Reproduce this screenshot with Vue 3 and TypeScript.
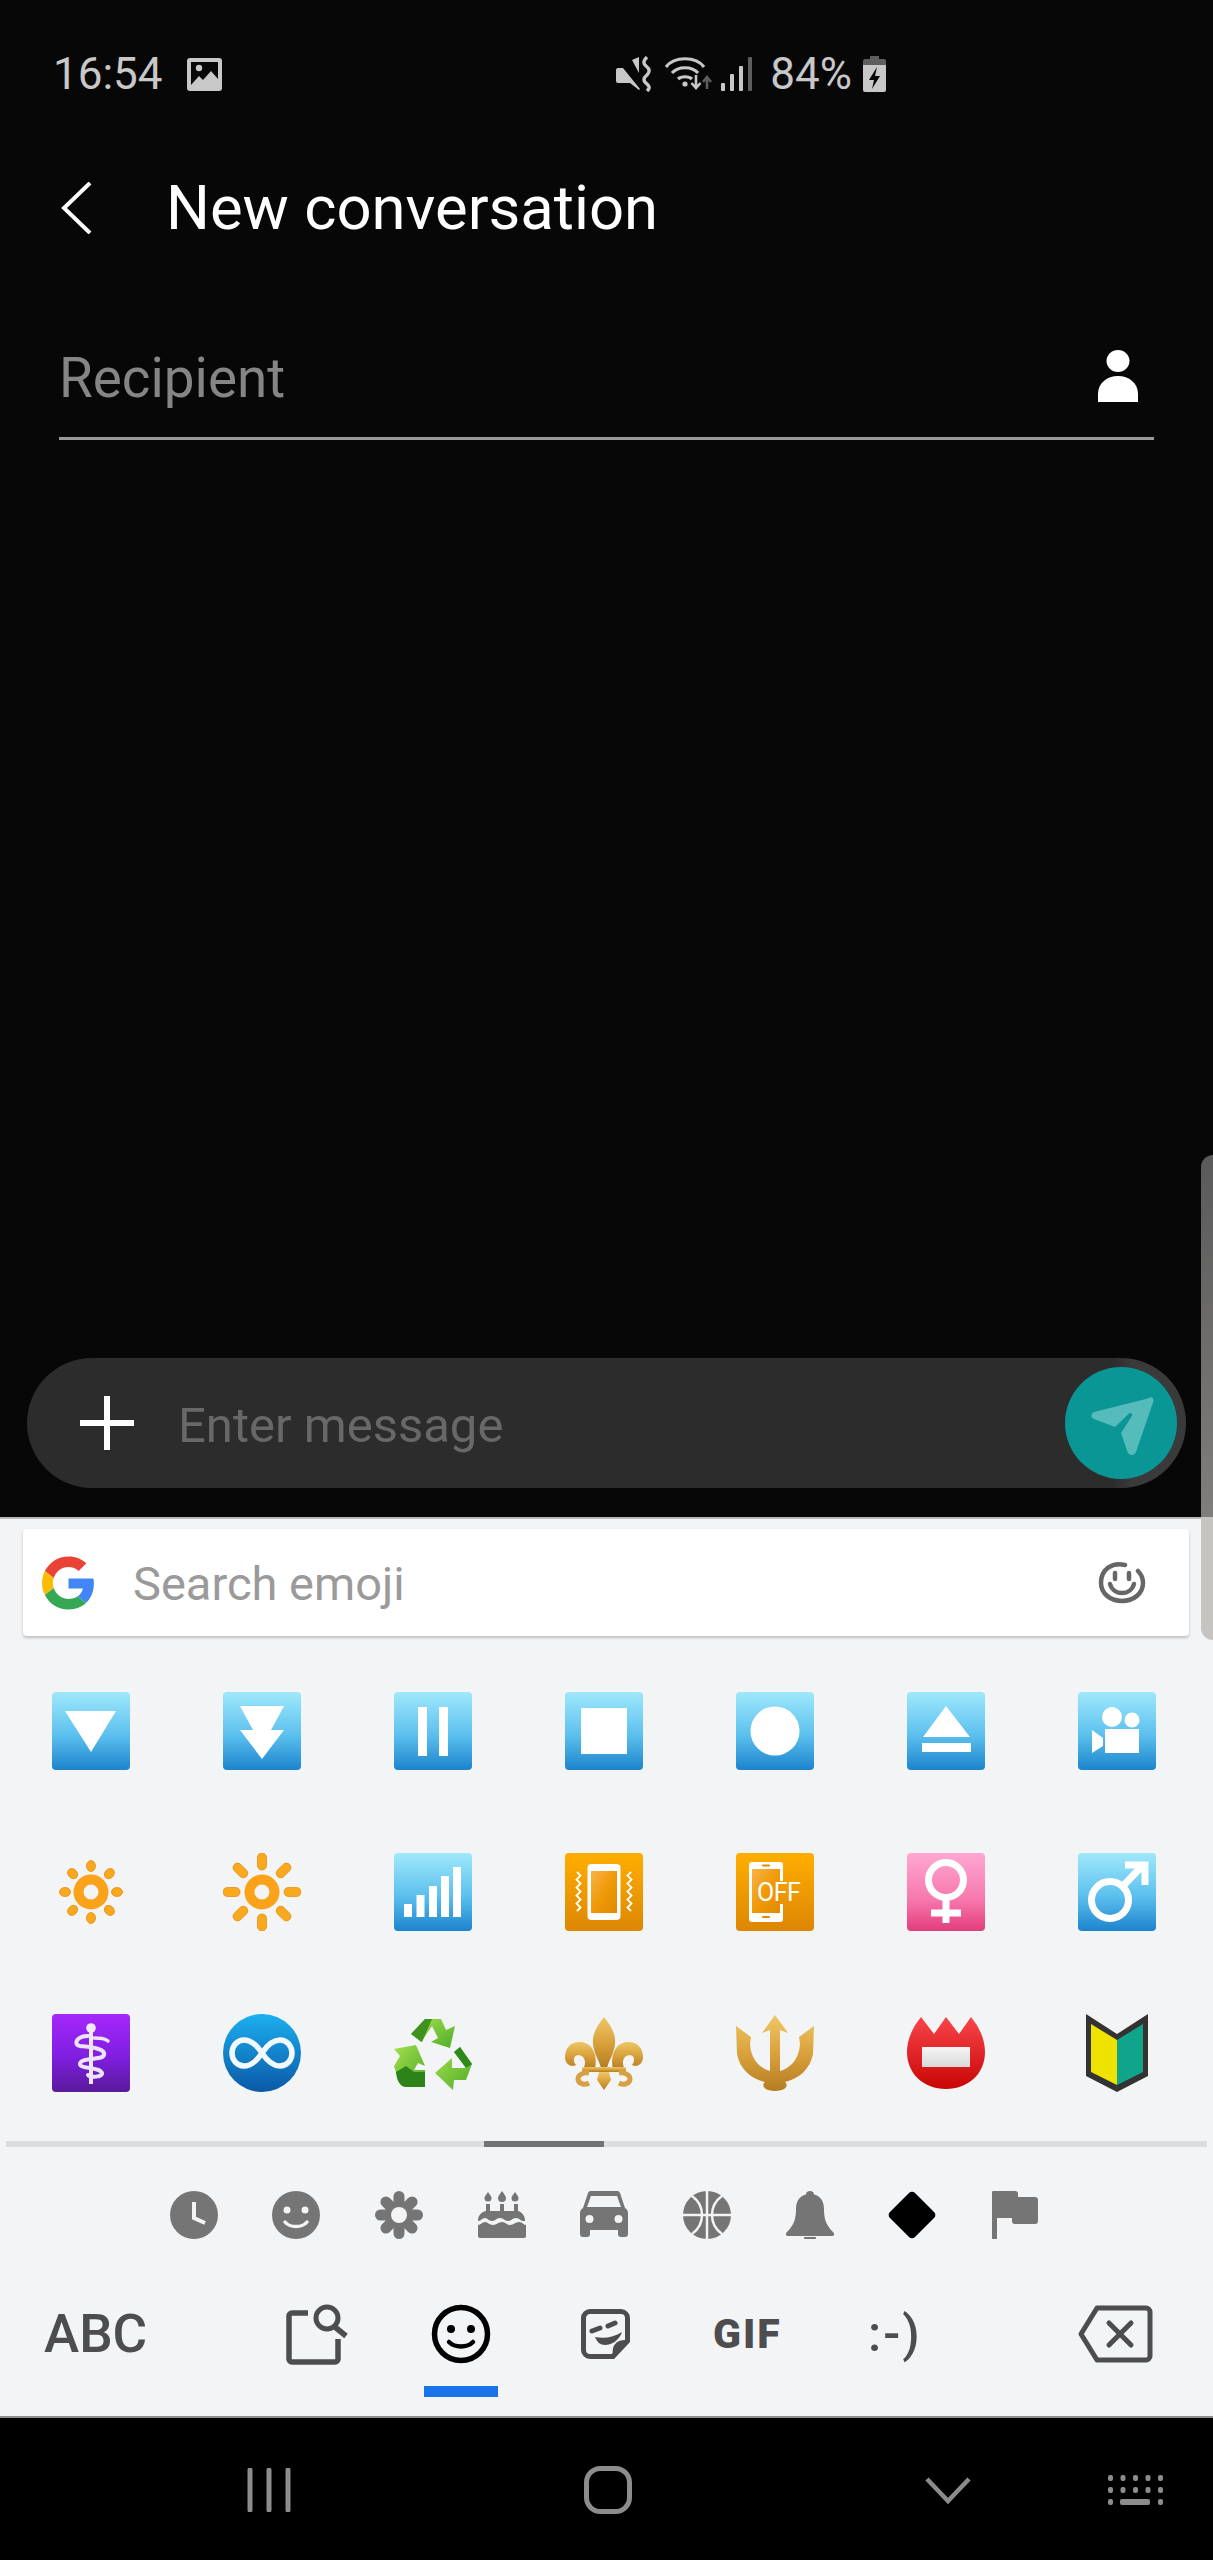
<script setup lang="ts">
/**
 * New conversation screen with the emoji keyboard open
 */
const rayAngles: number[] = [0, 45, 90, 135, 180, 225, 270, 315]
const petalAngles: number[] = [0, 45, 90, 135, 180, 225, 270, 315]
</script>

<template>
  <div class="phone">
    <!-- shared gradients -->
    <svg class="defs" width="0" height="0" aria-hidden="true">
      <defs>
        <linearGradient id="blue" x1="0" y1="0" x2="0" y2="1">
          <stop offset="0" stop-color="#a0e8fb" />
          <stop offset="0.55" stop-color="#5cc0ee" />
          <stop offset="1" stop-color="#1c84cd" />
        </linearGradient>
        <linearGradient id="orange" x1="0" y1="0" x2="0" y2="1">
          <stop offset="0" stop-color="#ffae00" />
          <stop offset="1" stop-color="#dd8604" />
        </linearGradient>
        <linearGradient id="screen" x1="0" y1="0" x2="1" y2="1">
          <stop offset="0" stop-color="#f8b34a" />
          <stop offset="0.5" stop-color="#f09a08" />
          <stop offset="1" stop-color="#e08a00" />
        </linearGradient>
        <linearGradient id="pink" x1="0" y1="0" x2="0" y2="1">
          <stop offset="0" stop-color="#ffa8d2" />
          <stop offset="0.6" stop-color="#f777ac" />
          <stop offset="1" stop-color="#e23d7c" />
        </linearGradient>
        <linearGradient id="purple" x1="0" y1="0" x2="0" y2="1">
          <stop offset="0" stop-color="#a428fb" />
          <stop offset="0.55" stop-color="#7f1ee0" />
          <stop offset="1" stop-color="#591a9a" />
        </linearGradient>
        <linearGradient id="disc" x1="0" y1="0" x2="0" y2="1">
          <stop offset="0" stop-color="#1cb0f0" />
          <stop offset="1" stop-color="#0a58a6" />
        </linearGradient>
        <linearGradient id="green" x1="0" y1="0" x2="1" y2="1">
          <stop offset="0" stop-color="#a6de4e" />
          <stop offset="1" stop-color="#4fae2a" />
        </linearGradient>
        <linearGradient id="gold" x1="0" y1="0" x2="0" y2="1">
          <stop offset="0" stop-color="#efc767" />
          <stop offset="0.5" stop-color="#d9a23c" />
          <stop offset="1" stop-color="#b57d22" />
        </linearGradient>
        <linearGradient id="red" x1="0" y1="0" x2="0" y2="1">
          <stop offset="0" stop-color="#f8454a" />
          <stop offset="1" stop-color="#c90505" />
        </linearGradient>
        <linearGradient id="plate" x1="0" y1="0" x2="0" y2="1">
          <stop offset="0" stop-color="#f6f6f6" />
          <stop offset="1" stop-color="#d8d8d8" />
        </linearGradient>
      </defs>
    </svg>

    <div class="status">
      <div class="status__left">
        <span class="status__time">16:54</span>
        <svg class="status__pic" width="35" height="33" viewBox="0 0 35 33">
          <path fill="#c8c8c8" d="M3 0h29a3 3 0 0 1 3 3v27a3 3 0 0 1-3 3H3a3 3 0 0 1-3-3V3a3 3 0 0 1 3-3z" />
          <path fill="#070708" d="M4 4h27v17l-7-8-8 9-4-4-8 9z" />
          <circle cx="12" cy="10" r="3.2" fill="#c8c8c8" />
        </svg>
      </div>
      <div class="status__right">
        <svg width="36" height="36" viewBox="0 0 36 36">
          <path fill="#c8c8c8" d="M0 14a2 2 0 0 1 2-2h5l17 21-1 1-9-7H2a2 2 0 0 1-2-2zM16 4l7-3v16z" />
          <path d="M31 1c-4 4-4 6-1 9 4 3 4 6 1 9-4 3-4 6 0 9 3 3 3 4 0 7" fill="none" stroke="#c8c8c8" stroke-width="3.4" />
        </svg>
        <svg class="status__wifi" width="48" height="36" viewBox="0 0 48 36">
          <path d="M1 11C9 0 31 0 39 11M7 17c6-7 20-7 26 0M13 23c3-3 11-3 14 0" fill="none" stroke="#c8c8c8" stroke-width="3.2" />
          <circle cx="20" cy="28" r="2.6" fill="#c8c8c8" />
          <path d="M31 19v12m-4.500-4 4.500 5 4.500-5" fill="none" stroke="#c8c8c8" stroke-width="2.600" />
          <path d="M42 33V22m-4 4 4-5 4 5" fill="none" stroke="#5c5c5c" stroke-width="2.600" />
        </svg>
        <svg class="status__signal" width="31" height="34" viewBox="0 0 31 34">
          <rect x="0" y="26" width="4" height="8" rx="1" fill="#c8c8c8" />
          <rect x="9" y="17" width="4" height="17" rx="1" fill="#c8c8c8" />
          <rect x="18" y="9" width="4" height="25" rx="1" fill="#c8c8c8" />
          <rect x="27" y="0" width="4" height="34" rx="1" fill="#5e5e5e" />
        </svg>
        <span class="status__pct">84%</span>
        <svg class="status__battery" width="23" height="36" viewBox="0 0 23 36">
          <path fill="#5e5e5e" d="M7 0h9v3h5a2 2 0 0 1 2 2v5H0V5a2 2 0 0 1 2-2h5z" />
          <path fill="#c8c8c8" d="M0 9h23v25a2 2 0 0 1-2 2H2a2 2 0 0 1-2-2z" />
          <path fill="#070708" d="M14 11 6 24h5l-2 9 8-13h-5z" />
        </svg>
      </div>
    </div>

    <div class="header">
      <svg class="header__back" width="32" height="52" viewBox="0 0 32 52">
        <path d="M30 1 4 26l26 25" fill="none" stroke="#fff" stroke-width="4" />
      </svg>
      <span class="header__title">New conversation</span>
    </div>

    <div class="recipient">
      <span class="recipient__label">Recipient</span>
      <svg width="40" height="52" viewBox="0 0 40 52">
        <ellipse cx="20" cy="11" rx="11.500" ry="11" fill="#fff" />
        <path d="M0 52V44C0 33 9 26 20 26s20 7 20 18v8z" fill="#fff" />
      </svg>
    </div>

    <div class="spacer"></div>

    <div class="composer">
      <svg class="composer__plus" width="54" height="54" viewBox="0 0 54 54">
        <path d="M27 0v54M0 27h54" stroke="#fff" stroke-width="6" />
      </svg>
      <span class="composer__hint">Enter message</span>
      <div class="composer__send">
        <svg width="112" height="112" viewBox="0 0 112 112">
          <path
            fill="#55bcbb"
            d="M83 31.500c2-2.500 6-1 5.500 2.500L71 85c-1.500 4-7 4-8.500 0L56 66l11-17c1-2-1.500-4-3-2.500L50 60 29 52c-3.500-1.500-3.500-5.500 0-7z"
          />
        </svg>
      </div>
    </div>

    <div class="keyboard">
      <div class="search">
        <svg class="search__logo" width="53" height="54" viewBox="0 0 48 48">
          <path fill="#ea4335" d="M24 9.500c3.500 0 6.700 1.200 9.200 3.600l6.900-6.900C35.900 2.400 30.500 0 24 0 14.600 0 6.500 5.400 2.600 13.200l8 6.200C12.500 13.700 17.800 9.500 24 9.500z" />
          <path fill="#4285f4" d="M47 24.500c0-1.600-.2-3.200-.5-4.500H24v9h13c-.6 3-2.300 5.500-4.900 7.200l7.700 6C44.300 38 47 31.900 47 24.500z" />
          <path fill="#fbbc05" d="M10.600 28.600C10.100 27.100 9.800 25.600 9.800 24s.3-3.100.8-4.600l-8-6.200C1 16.400 0 20.100 0 24s1 7.600 2.600 10.800z" />
          <path fill="#34a853" d="M24 48c6.500 0 11.900-2.100 15.800-5.800l-7.700-6c-2.100 1.400-4.900 2.300-8.100 2.300-6.200 0-11.500-4.200-13.400-9.900l-8 6.200C6.500 42.600 14.600 48 24 48z" />
        </svg>
        <span class="search__hint">Search emoji</span>
        <svg class="search__face" width="48" height="42" viewBox="0 0 48 42">
          <path d="M27 3C14 0 3 7 3 21c0 11 10 18 21 18s21-7 21-18c0-5-2-9-5-12" fill="none" stroke="#666" stroke-width="4.500" stroke-linecap="round" />
          <path d="M12 22c2 7 8 9 12 9s10-2 12-9" fill="none" stroke="#666" stroke-width="4.500" stroke-linecap="round" />
          <path d="M17 11v6M31 11v6" stroke="#666" stroke-width="4.500" stroke-linecap="round" />
        </svg>
      </div>

      <div class="emoji-grid">
        <!-- row 1 -->
        <svg class="emoji" viewBox="0 0 78 78">
          <rect width="78" height="78" rx="4" fill="url(#blue)" />
          <path d="M13 19h51L39 60z" fill="#fff" />
        </svg>
        <svg class="emoji" viewBox="0 0 78 78">
          <rect width="78" height="78" rx="4" fill="url(#blue)" />
          <path d="M17 14h44L48 38h13L39 67 17 38h13z" fill="#fff" />
        </svg>
        <svg class="emoji" viewBox="0 0 78 78">
          <rect width="78" height="78" rx="4" fill="url(#blue)" />
          <path d="M24 15h9v49h-9zM45 15h9v49h-9z" fill="#fff" />
        </svg>
        <svg class="emoji" viewBox="0 0 78 78">
          <rect width="78" height="78" rx="4" fill="url(#blue)" />
          <rect x="16" y="16" width="46" height="46" fill="#fff" />
        </svg>
        <svg class="emoji" viewBox="0 0 78 78">
          <rect width="78" height="78" rx="4" fill="url(#blue)" />
          <circle cx="39" cy="39" r="24.500" fill="#fff" />
        </svg>
        <svg class="emoji" viewBox="0 0 78 78">
          <rect width="78" height="78" rx="4" fill="url(#blue)" />
          <path d="M39 14l24 31H16zM15 51h49v9H15z" fill="#fff" />
        </svg>
        <svg class="emoji" viewBox="0 0 78 78">
          <rect width="78" height="78" rx="4" fill="url(#blue)" />
          <circle cx="34" cy="25" r="10" fill="#fff" />
          <circle cx="54" cy="28" r="7.500" fill="#fff" />
          <path d="M27 37h34v24H27zM14 38l11 8v8l-11 7z" fill="#fff" />
        </svg>

        <!-- row 2 -->
        <svg class="emoji" viewBox="0 0 78 78">
          <g fill="#f9a91e" stroke="#e78d12" stroke-width="0.800">
            <ellipse
              v-for="a in rayAngles"
              :key="a"
              cx="39"
              cy="13"
              rx="4.500"
              ry="5.500"
              :transform="`rotate(${a} 39 39)`"
            />
          </g>
          <circle cx="39" cy="39" r="12.500" fill="none" stroke="#f9a21a" stroke-width="10" />
        </svg>
        <svg class="emoji" viewBox="0 0 78 78">
          <g fill="#f9a91e" stroke="#e78d12" stroke-width="0.800">
            <rect
              v-for="a in rayAngles"
              :key="a"
              x="34.500"
              y="0"
              width="9"
              height="17"
              rx="4.500"
              :transform="`rotate(${a} 39 39)`"
            />
          </g>
          <circle cx="39" cy="39" r="12.500" fill="none" stroke="#f9a21a" stroke-width="10" />
        </svg>
        <svg class="emoji" viewBox="0 0 78 78">
          <rect width="78" height="78" rx="4" fill="url(#blue)" />
          <path d="M10 51h8v13h-8zM22.500 42h8v22h-8zM35 33h8v31h-8zM47 23h8v41h-8zM59 14h8v50h-8z" fill="#fff" />
        </svg>
        <svg class="emoji" viewBox="0 0 78 78">
          <rect width="78" height="78" rx="4" fill="url(#orange)" />
          <rect x="22.500" y="11" width="33" height="56" rx="4" fill="#fff" />
          <rect x="26" y="18" width="26" height="42" fill="url(#screen)" />
          <path d="M12 19l3.500 3.500-4 4 4 4-4 4 4 4-4 4 4 4-4 4 4 4-3.500 3.500M66 19l-3.500 3.500 4 4-4 4 4 4-4 4 4 4-4 4 4 4-4 4 3.500 3.500" fill="none" stroke="#fff" stroke-width="1.800" />
        </svg>
        <svg class="emoji" viewBox="0 0 78 78">
          <rect width="78" height="78" rx="4" fill="url(#orange)" />
          <path d="M16 9h28a3 3 0 0 1 3 3v16h-3v-12H16v44h28v-9h3v15a3 3 0 0 1-3 3H16a3 3 0 0 1-3-3V12a3 3 0 0 1 3-3z" fill="#fff" />
          <rect x="16" y="16" width="28" height="44" fill="url(#screen)" />
          <rect x="26" y="11.500" width="8" height="2" rx="1" fill="#e08a00" />
          <rect x="26" y="63" width="8" height="2" rx="1" fill="#e08a00" />
          <text class="emoji__off" x="21" y="48">OFF</text>
        </svg>
        <svg class="emoji" viewBox="0 0 78 78">
          <rect width="78" height="78" rx="4" fill="url(#pink)" />
          <circle cx="39" cy="27" r="17.500" fill="none" stroke="#fff" stroke-width="7" />
          <path d="M39 46v24M24 60h30" stroke="#fff" stroke-width="7" />
        </svg>
        <svg class="emoji" viewBox="0 0 78 78">
          <rect width="78" height="78" rx="4" fill="url(#blue)" />
          <circle cx="32" cy="47" r="18.500" fill="none" stroke="#fff" stroke-width="7" />
          <path d="M45 33l21-22M47 12h20v20" fill="none" stroke="#fff" stroke-width="7" />
        </svg>

        <!-- row 3 -->
        <svg class="emoji" viewBox="0 0 78 78">
          <rect width="78" height="78" rx="4" fill="url(#purple)" />
          <path d="M39 14v56" stroke="#f0e8fa" stroke-width="4" />
          <circle cx="39" cy="14" r="4.800" fill="#f0e8fa" />
          <path d="M36 22c-12 0-15 9-8 10 8 1 26 2 24 9-2 6-24 2-24 9 0 5 20 3 22 9 1 4-12 5-14 2" fill="none" stroke="#ece3f8" stroke-width="4" stroke-linecap="round" />
          <path d="M42 24c6 0 11 0 14 3" fill="none" stroke="#ece3f8" stroke-width="3.500" stroke-linecap="round" />
        </svg>
        <svg class="emoji" viewBox="0 0 78 78">
          <circle cx="39" cy="39" r="39" fill="url(#disc)" />
          <path d="M39 39c-6-9-12-13-18-13-7 0-12 6-12 13s5 13 12 13c6 0 12-4 18-13s12-13 18-13c7 0 12 6 12 13s-5 13-12 13c-6 0-12-4-18-13z" fill="none" stroke="#f2f9fe" stroke-width="5.500" />
        </svg>
        <svg class="emoji" viewBox="0 0 78 78">
          <path fill="url(#green)" d="M17 20 31 5h16l5 11 9-4-5 22-19-6 7-4-6-12-11 16z" />
          <path fill="#3f921f" d="M17 20 31 5h7L28 28z" />
          <path fill="url(#green)" d="M0 35l22-4 9 21-7-3-4 7h11v15H12c-5 0-8-5-9-9L0 52l6-10z" />
          <path fill="#2c8418" d="M20 58h11v15H12c-5 0-8-5-9-9l-1-6 10-6z" />
          <path fill="url(#green)" d="M66 33l12 17-6 16H60l-1 10-18-17 17-15v10h14L60 38z" />
          <path fill="#2f8a1a" d="M66 33l12 17-6 4-12-16z" />
        </svg>
        <svg class="emoji" viewBox="0 0 78 78">
          <g fill="url(#gold)">
            <path d="M39 3c7 9 12 17 11 27-1 10-6 16-8 24h-6c-2-8-7-14-8-24C27 20 32 12 39 3z" />
            <path d="M30 55C33 42 28 29 16 28 6 27 0 34 0 43c0 7 6 11 11 8-4-5-2-10 3-10 6 1 8 8 4 14z" />
            <path d="M48 55c-3-13 2-26 14-27 10-1 16 6 16 15 0 7-6 11-11 8 4-5 2-10-3-10-6 1-8 8-4 14z" />
            <rect x="17" y="53" width="44" height="5" rx="2" />
            <path d="M34 58h10l2 8-7 10-7-10z" />
          </g>
          <path d="M24 59c-6-1-11 2-11 6s6 7 11 4M54 59c6-1 11 2 11 6s-6 7-11 4" fill="none" stroke="#d5a144" stroke-width="5" />
        </svg>
        <svg class="emoji" viewBox="0 0 78 78">
          <path
            fill="url(#gold)"
            d="M39 1 52 19l-8-3v41c10-3 19-11 20-27l-1-7 15-11-1 28c-3 16-15 25-28 28 3 2 3 9-10 9s-13-7-10-9C16 65 4 56 1 40L0 12l15 11-1 7c1 16 10 24 20 27V16l-8 3z"
          />
        </svg>
        <svg class="emoji" viewBox="0 0 78 78">
          <path fill="url(#red)" d="M14 3l13 17L39 3l13 17L64 3c9 11 14 23 14 35 0 22-17 37-39 37S0 60 0 38C0 26 5 14 14 3z" />
          <rect x="15" y="33" width="48" height="20" fill="url(#plate)" />
        </svg>
        <svg class="emoji" viewBox="0 0 78 78">
          <path fill="#333" d="M8 0l31 20L70 0v62L39 78 8 62z" />
          <path fill="#efe100" d="M13 10l26 16v45L13 58z" />
          <path fill="#10a58a" d="M65 10 39 26v45l26-13z" />
        </svg>
      </div>

      <div class="pager"><div class="pager__thumb"></div></div>

      <div class="categories">
        <svg class="cat" viewBox="0 0 48 48">
          <circle cx="24" cy="24" r="24" fill="#757575" />
          <path d="M24 11v16l11 5" fill="none" stroke="#f2f4f6" stroke-width="4" />
        </svg>
        <svg class="cat" viewBox="0 0 48 48">
          <circle cx="24" cy="24" r="24" fill="#757575" />
          <circle cx="15" cy="19" r="3.500" fill="#f2f4f6" />
          <circle cx="33" cy="19" r="3.500" fill="#f2f4f6" />
          <path d="M13 31c5 6 17 6 22 0" fill="none" stroke="#f2f4f6" stroke-width="3.500" stroke-linecap="round" />
        </svg>
        <svg class="cat" viewBox="0 0 48 48">
          <rect
            v-for="a in petalAngles"
            :key="a"
            x="18.500"
            y="0"
            width="11"
            height="19"
            rx="5.500"
            fill="#757575"
            :transform="`rotate(${a} 24 24)`"
          />
          <circle cx="24" cy="24" r="11" fill="#757575" />
          <circle cx="24" cy="24" r="8" fill="#f2f4f6" />
        </svg>
        <svg class="cat" viewBox="0 0 48 48">
          <path fill="#757575" d="M10 1c2 3 3.500 4 3.500 6a3.500 3.500 0 0 1-7 0c0-2 1.500-3 3.500-6zM24 0c2 3 4 5 4 7a4 4 0 0 1-8 0c0-2 2-4 4-7zM37 1c2 3 3.500 4 3.500 6a3.500 3.500 0 0 1-7 0c0-2 1.500-3 3.500-6z" />
          <path fill="#757575" d="M8 13h4v7h10v-7h4v7h10v-7h4v7c4 1 7 5 7 9 0 1 0 1-2 1-3 0-3-3-7-3s-4 3-8 3-4-3-8-3-4 3-8 3-4-3-7-3-4 3-6 3c-1 0-1-1-1-1 0-4 3-8 8-9z" />
          <path fill="#757575" d="M0 34c3 0 4-3 7-3s4 3 8 3 5-3 9-3 4 3 8 3 5-3 9-3 4 3 7 3v11a2 2 0 0 1-2 2H2a2 2 0 0 1-2-2z" />
        </svg>
        <svg class="cat" viewBox="0 0 48 48">
          <path fill="#757575" d="M8 2a3 3 0 0 1 3-2h26a3 3 0 0 1 3 2l5 15c2 1 3 3 3 5v21a3 3 0 0 1-3 3h-4a3 3 0 0 1-3-3v-4H10v4a3 3 0 0 1-3 3H3a3 3 0 0 1-3-3V22c0-2 1-4 3-5z" />
          <path fill="#f2f4f6" d="M11 5h26l4 11H7z" />
          <circle cx="9.500" cy="28" r="4" fill="#f2f4f6" />
          <circle cx="38.500" cy="28" r="4" fill="#f2f4f6" />
        </svg>
        <svg class="cat" viewBox="0 0 48 48">
          <circle cx="24" cy="24" r="24" fill="#757575" />
          <path d="M24 0v48M0 24h48M9 5c7 5 10 12 10 19S16 38 9 43M39 5c-7 5-10 12-10 19s3 14 10 19" fill="none" stroke="#f2f4f6" stroke-width="2.500" />
        </svg>
        <svg class="cat" viewBox="0 0 48 48">
          <path fill="#757575" d="M24 0c2.500 0 4 1.500 4 3.500C35 5 38 11 38 18c0 10 2 16 9 23 2 2 1 4-1 4H2c-2 0-3-2-1-4 7-7 9-13 9-23 0-7 3-13 10-14.500C20 1.500 21.500 0 24 0z" />
          <path fill="#757575" d="M18 46h12c0 3-3 5-6 5s-6-2-6-5z" />
        </svg>
        <svg class="cat" viewBox="0 0 48 48">
          <path fill="#000" d="M21 2a4 4 0 0 1 6 0l19 19a4 4 0 0 1 0 6L27 46a4 4 0 0 1-6 0L2 27a4 4 0 0 1 0-6z" />
        </svg>
        <svg class="cat" viewBox="0 0 48 48">
          <path fill="#757575" d="M2 0h22c2 0 3 1 3 3v3h17c2 0 3 1 3 3v21c0 2-1 3-3 3H24c-2 0-3-1-3-3v-3H6v20c0 1.500-1 2-2 2s-3-.5-3-2V2c0-1 0-2 1-2z" />
        </svg>
      </div>

      <div class="tabs">
        <span class="tabs__abc">ABC</span>
        <svg class="tabs__find" width="65" height="65" viewBox="0 0 65 65">
          <path d="M23 11H7a3 3 0 0 0-3 3v43a3 3 0 0 0 3 3h43a3 3 0 0 0 3-3V37" fill="none" stroke="#4d4d4f" stroke-width="5.500" />
          <circle cx="42" cy="16" r="11" fill="none" stroke="#4d4d4f" stroke-width="5" />
          <path d="M50 25l11 9" stroke="#4d4d4f" stroke-width="5.500" />
        </svg>
        <div class="tabs__active">
          <svg width="60" height="60" viewBox="0 0 60 60">
            <circle cx="30" cy="30" r="26.500" fill="none" stroke="#000" stroke-width="5.500" />
            <circle cx="20" cy="25" r="4" fill="#000" />
            <circle cx="40" cy="25" r="4" fill="#000" />
            <path d="M18 38c6 6 18 6 24 0" fill="none" stroke="#000" stroke-width="4.500" stroke-linecap="round" />
          </svg>
        </div>
        <svg class="tabs__sticker" width="49" height="50" viewBox="0 0 49 50">
          <path d="M9 2.500h31a6.500 6.500 0 0 1 6.500 6.500v23L32 47.500H9A6.500 6.500 0 0 1 2.500 41V9A6.500 6.500 0 0 1 9 2.500z" fill="none" stroke="#4d4d4f" stroke-width="5" />
          <path d="M47 31c-12-1-17 5-15 17z" fill="#4d4d4f" />
          <path d="M11 22l8-3M27 17l7-3" stroke="#4d4d4f" stroke-width="5" stroke-linecap="round" />
          <path d="M14 28c10 2 19 0 27-5-3 9-11 13-17 13-5 0-8-3-10-8z" fill="#4d4d4f" />
        </svg>
        <span class="tabs__gif">GIF</span>
        <span class="tabs__text">:-)</span>
        <svg class="tabs__del" width="75" height="58" viewBox="0 0 75 58">
          <path d="M19 3h49a4 4 0 0 1 4 4v44a4 4 0 0 1-4 4H19L3 29z" fill="none" stroke="#4d4d4f" stroke-width="5" stroke-linejoin="round" />
          <path d="M31 18l22 22M53 18 31 40" stroke="#4d4d4f" stroke-width="5" stroke-linecap="round" />
        </svg>
      </div>
    </div>

    <div class="nav">
      <svg class="nav__recents" width="44" height="44" viewBox="0 0 44 44">
        <path d="M3 2v40M22 2v40M41 2v40" stroke="#8c8c8c" stroke-width="5" stroke-linecap="round" />
      </svg>
      <svg class="nav__home" width="48" height="48" viewBox="0 0 48 48">
        <rect x="2.500" y="2.500" width="43" height="43" rx="14" fill="none" stroke="#8c8c8c" stroke-width="5" />
      </svg>
      <svg class="nav__down" width="46" height="27" viewBox="0 0 46 27">
        <path d="M2 2l21 22L44 2" fill="none" stroke="#8c8c8c" stroke-width="4.500" />
      </svg>
      <svg class="nav__keys" width="55" height="30" viewBox="0 0 55 30">
        <g fill="#8c8c8c">
          <rect v-for="i in 5" :key="'a' + i" :x="(i - 1) * 12.500" y="0" width="5" height="6" rx="2" />
          <rect v-for="i in 5" :key="'b' + i" :x="(i - 1) * 12.500" y="12" width="5" height="6" rx="2" />
          <rect x="0" y="24" width="5" height="6" rx="2" />
          <rect x="12" y="24" width="30" height="6" rx="2" />
          <rect x="50" y="24" width="5" height="6" rx="2" />
        </g>
      </svg>
    </div>

    <!-- scroll handle lying over the right edge -->
    <div class="handle"></div>
  </div>
</template>

<style scoped>
.phone {
  position: relative;
  display: flex;
  flex-direction: column;
  width: 1213px;
  height: 2560px;
  overflow: hidden;
  background: #070708;
  font-family: Roboto, "Liberation Sans", sans-serif;
}

.defs {
  position: absolute;
}

/* Status bar */
.status {
  display: flex;
  align-items: center;
  justify-content: space-between;
  height: 148px;
  padding: 0 327px 0 53px;
  color: #c8c8c8;
  box-sizing: border-box;
}
.status__left,
.status__right {
  display: flex;
  align-items: center;
}
.status__time {
  font-size: 44px;
}
.status__pic {
  margin-left: 24px;
}
.status__wifi {
  margin-left: 13px;
}
.status__signal {
  margin-left: 8px;
}
.status__pct {
  margin-left: 18px;
  font-size: 44px;
}
.status__battery {
  margin-left: 11px;
}

/* Header */
.header {
  display: flex;
  align-items: center;
  height: 120px;
  padding-left: 60px;
}
.header__title {
  margin-left: 74px;
  font-size: 61.6px;
  color: #fff;
}

/* Recipient */
.recipient {
  display: flex;
  align-items: center;
  justify-content: space-between;
  height: 110px;
  margin: 62px 59px 0;
  padding: 0 16px 16px 0;
  border-bottom: 3px solid #9a9a9a;
  box-sizing: border-box;
}
.recipient__label {
  padding-top: 5px;
  font-size: 54.8px;
  color: #858585;
}

.spacer {
  flex: 1;
}

/* Composer */
.composer {
  display: flex;
  align-items: center;
  width: 1159px;
  height: 130px;
  margin: 0 0 29px 27px;
  border-radius: 65px;
  background: linear-gradient(to right, #2c2c2c 1085px, #3a3a3a 1105px);
  overflow: hidden;
}
.composer__plus {
  margin-left: 53px;
}
.composer__hint {
  margin-left: 44px;
  padding-top: 4px;
  font-size: 49px;
  color: #686868;
}
.composer__send {
  display: flex;
  margin-left: auto;
  margin-right: 9px;
  border-radius: 50%;
  background: #0a9695;
}

/* Keyboard */
.keyboard {
  height: 901px;
  background: #f2f4f6;
  border-top: 2px solid #b8b8b8;
  border-bottom: 2px solid #8e8e8e;
  box-sizing: border-box;
}
.search {
  display: flex;
  align-items: center;
  height: 107px;
  margin: 10px 24px 0 23px;
  padding: 0 43px 0 19px;
  background: #fff;
  border-radius: 4px;
  box-shadow: 0 2px 3px rgba(0, 0, 0, 0.22);
}
.search__hint {
  margin-left: 38px;
  padding-top: 2px;
  font-size: 47px;
  color: #9a9a9a;
}
.search__face {
  margin-left: auto;
}

.emoji-grid {
  display: grid;
  grid-template-columns: repeat(7, 171px);
  grid-auto-rows: 78px;
  row-gap: 83px;
  justify-items: center;
  margin-top: 56px;
  padding-left: 5px;
}
.emoji {
  display: block;
  width: 78px;
  height: 78px;
}
.emoji__off {
  font-family: Roboto, sans-serif;
  font-size: 25px;
  fill: #fff;
  letter-spacing: -0.5px;
}

.pager {
  display: flex;
  height: 6px;
  margin: 49px 6px 0;
  padding-left: 478px;
  background: #dcdde0;
}
.pager__thumb {
  width: 120px;
  background: #737373;
}

.categories {
  display: flex;
  align-items: center;
  gap: 54.7px;
  height: 136px;
  padding-left: 169.5px;
}
.cat {
  display: block;
  flex: none;
  width: 48px;
  height: 48px;
}

.tabs {
  display: flex;
  align-items: center;
  height: 102px;
  padding-left: 44px;
  color: #4d4d4f;
}
.tabs__abc {
  width: 102px;
  font-size: 53px;
  font-weight: 500;
}
.tabs__find {
  margin-left: 139px;
}
.tabs__active {
  position: relative;
  display: flex;
  margin-left: 81px;
}
.tabs__active::after {
  content: "";
  position: absolute;
  left: -7px;
  top: 82px;
  width: 74px;
  height: 11px;
  background: #1a73e8;
}
.tabs__sticker {
  margin-left: 90px;
}
.tabs__gif {
  width: 72px;
  margin-left: 83px;
  font-size: 41px;
  font-weight: 900;
  letter-spacing: 2px;
}
.tabs__text {
  width: 52px;
  margin-left: 83px;
  font-size: 50px;
  font-weight: 500;
  letter-spacing: 2px;
}
.tabs__del {
  margin-left: 158px;
}

/* Navigation */
.nav {
  display: flex;
  align-items: center;
  flex: none;
  height: 142px;
  padding: 2px 0 0 247px;
  background: #000;
  box-sizing: border-box;
}
.nav__home {
  margin-left: 293px;
}
.nav__down {
  margin-left: 293px;
}
.nav__keys {
  margin-left: 137px;
}

.handle {
  position: absolute;
  top: 1155px;
  right: 0;
  width: 12px;
  height: 485px;
  border-radius: 16px 0 0 16px;
  background: linear-gradient(to bottom, #5a5a5a 0, #807e7c 74.6%, #c6c3c0 74.7%, #c6c3c0 100%);
}
</style>

<style>
body {
  margin: 0;
  background: #070708;
}
</style>
